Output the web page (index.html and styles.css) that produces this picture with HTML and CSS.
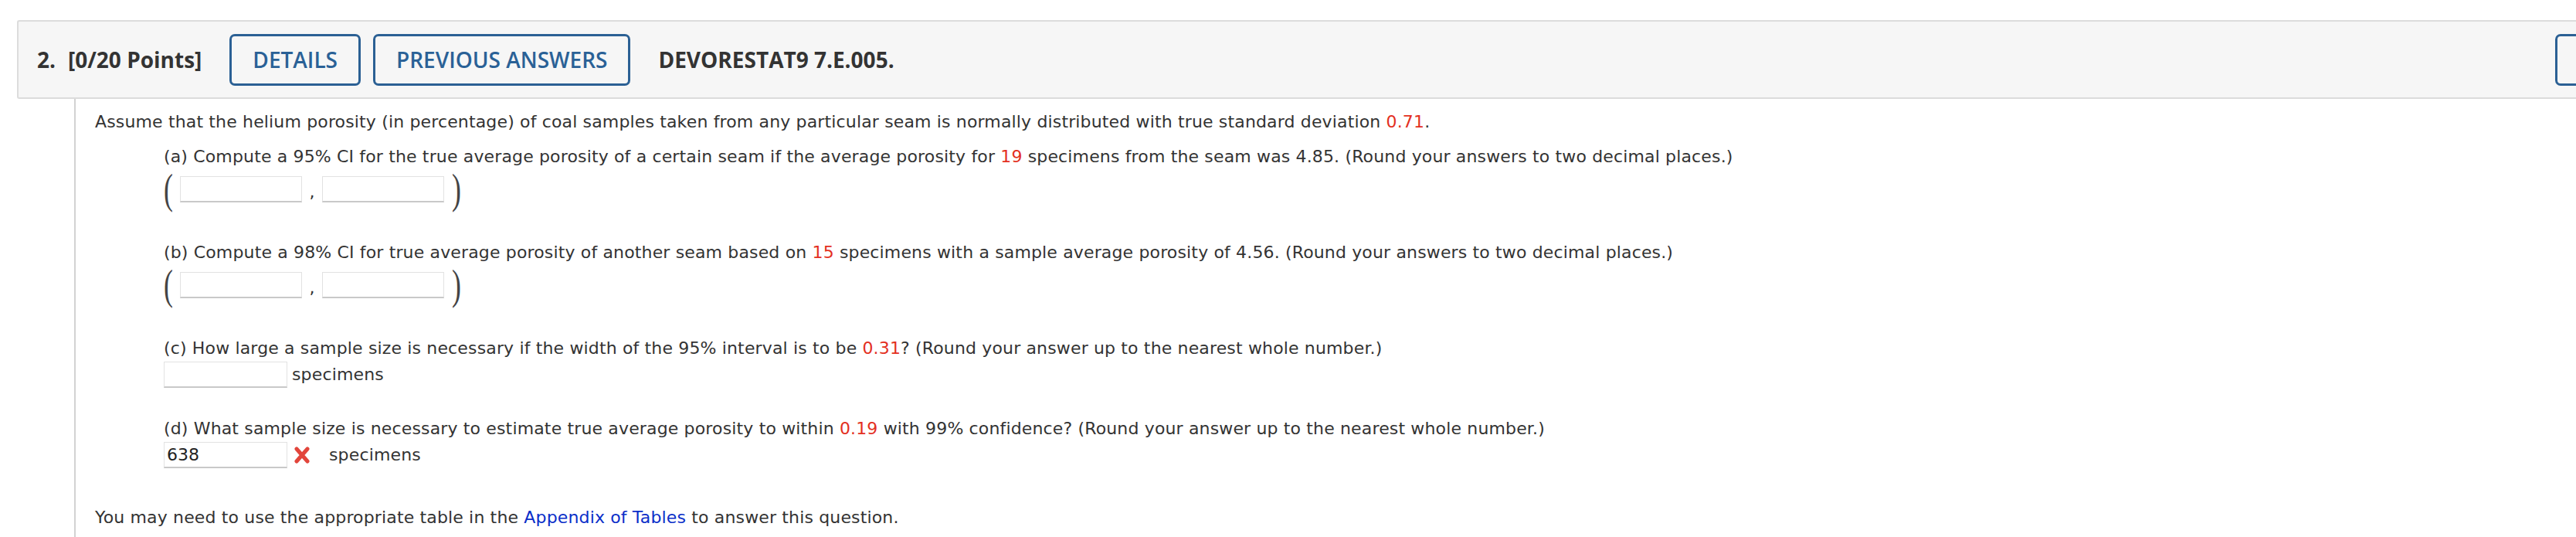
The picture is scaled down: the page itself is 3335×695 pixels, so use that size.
FILE: index.html
```html
<!DOCTYPE html>
<html lang="en">
<head>
<meta charset="utf-8">
<title>Question 2</title>
<link rel="stylesheet" href="styles.css">
</head>
<body>
<div class="page">
  <div class="qhead">
    <span class="qnum">2.</span>
    <span class="qpts">[0/20 Points]</span>
    <button class="btn btn-first" type="button">DETAILS</button>
    <button class="btn btn-next" type="button">PREVIOUS ANSWERS</button>
    <span class="qcode">DEVORESTAT9 7.E.005.</span>
    <span class="spacer"></span>
    <button class="btn btn-edge" type="button" aria-label="My notes"></button>
  </div>
  <div class="qbody">
    <p class="intro">Assume that the helium porosity (in percentage) of coal samples taken from any particular seam is normally distributed with true standard deviation <span class="red">0.71</span>.</p>

    <div class="part part-a">
      <p class="label">(a) Compute a 95% CI for the true average porosity of a certain seam if the average porosity for <span class="red">19</span> specimens from the seam was 4.85. (Round your answers to two decimal places.)</p>
      <div class="interval">
        <span class="paren paren-l">(</span>
        <input class="box" type="text">
        <span class="comma">,</span>
        <input class="box" type="text">
        <span class="paren paren-r">)</span>
      </div>
    </div>

    <div class="part part-b">
      <p class="label">(b) Compute a 98% CI for true average porosity of another seam based on <span class="red">15</span> specimens with a sample average porosity of 4.56. (Round your answers to two decimal places.)</p>
      <div class="interval">
        <span class="paren paren-l">(</span>
        <input class="box" type="text">
        <span class="comma">,</span>
        <input class="box" type="text">
        <span class="paren paren-r">)</span>
      </div>
    </div>

    <div class="part part-c">
      <p class="label">(c) How large a sample size is necessary if the width of the 95% interval is to be <span class="red">0.31</span>? (Round your answer up to the nearest whole number.)</p>
      <div class="answer">
        <input class="box" type="text">
        <span class="unit">specimens</span>
      </div>
    </div>

    <div class="part part-d">
      <p class="label">(d) What sample size is necessary to estimate true average porosity to within <span class="red">0.19</span> with 99% confidence? (Round your answer up to the nearest whole number.)</p>
      <div class="answer">
        <input class="box" type="text" value="638">
        <svg class="wrong" width="22" height="22" viewBox="0 0 22 22" aria-hidden="true">
          <path d="M4 3 L18 19 M18 3 L4 19" stroke="#e2453b" stroke-width="5" stroke-linecap="round" fill="none"/>
        </svg>
        <span class="unit unit-d">specimens</span>
      </div>
    </div>

    <p class="foot">You may need to use the appropriate table in the <a class="link" href="#">Appendix of Tables</a> to answer this question.</p>
  </div>
</div>
</body>
</html>
```

FILE: styles.css
```css
html, body {
  margin: 0;
  padding: 0;
  background: #ffffff;
  overflow: hidden;
}

.page {
  padding-top: 26px;
  font-family: "DejaVu Sans", Verdana, sans-serif;
  color: #333333;
}

.qhead {
  display: flex;
  align-items: center;
  margin-left: 22px;
  height: 102px;
  box-sizing: border-box;
  background: #f6f6f6;
  border: 2px solid #dcdcdc;
  border-right: none;
  border-radius: 3px 0 0 3px;
  padding-left: 24px;
  font-family: "Open Sans", sans-serif;
  font-size: 28px;
  font-weight: 700;
  color: #333333;
  white-space: nowrap;
}

.qpts {
  margin-left: 16px;
}

.btn {
  height: 67px;
  box-sizing: border-box;
  padding: 0 27px;
  background: #f6f6f6;
  border: 3px solid #2b6094;
  border-radius: 7px;
  font-family: "Open Sans", sans-serif;
  font-size: 28px;
  font-weight: 600;
  color: #2a6196;
  white-space: nowrap;
}

.btn-first {
  margin-left: 36px;
}

.btn-next {
  margin-left: 16px;
}

.qcode {
  margin-left: 36px;
}

.spacer {
  flex: 1;
}

.btn-edge {
  width: 200px;
  margin-right: -173px;
}

.qbody {
  margin-left: 96px;
  border-left: 2px solid #d2d2d2;
  padding-left: 25px;
  padding-top: 17px;
  padding-bottom: 40px;
  font-size: 22px;
  line-height: 26px;
  letter-spacing: 0.15px;
}

.qbody p {
  margin: 0;
}

.red {
  color: #e3301f;
}

.part {
  margin-left: 89px;
}

.part-a {
  margin-top: 19px;
}

.part-b {
  margin-top: 45px;
}

.part-c {
  margin-top: 45px;
}

.part-d {
  margin-top: 40px;
}

.interval {
  display: flex;
  align-items: center;
  height: 48px;
  margin-top: 5px;
}

.paren {
  display: block;
  height: 48px;
  font-family: "Liberation Serif", serif;
  font-size: 55px;
  line-height: 48px;
  color: #444444;
  transform: scaleX(0.65);
}

.paren-l {
  width: 21px;
  transform-origin: left center;
}

.paren-r {
  width: 20px;
  padding-left: 10px;
  transform-origin: 10px center;
}

.comma {
  width: 26px;
  text-align: center;
  align-self: center;
  padding-top: 8px;
  font-size: 22px;
}

.box {
  width: 158px;
  height: 34px;
  box-sizing: border-box;
  margin: 0;
  padding: 0 3px;
  background: #ffffff;
  border: 1px solid #e2e2e2;
  border-bottom: 2px solid #c9c9c9;
  border-radius: 0;
  font-family: "DejaVu Sans", Verdana, sans-serif;
  font-size: 22px;
  color: #222222;
  outline: none;
}

.answer {
  display: flex;
  align-items: center;
  margin-top: 4px;
}

.answer .box {
  width: 160px;
}

.unit {
  margin-left: 6px;
}

.wrong {
  margin-left: 8px;
  flex: none;
}

.unit-d {
  margin-left: 24px;
}

.qbody .foot {
  margin-top: 51px;
}

.link {
  color: #0b2fc9;
  text-decoration: none;
}
```
